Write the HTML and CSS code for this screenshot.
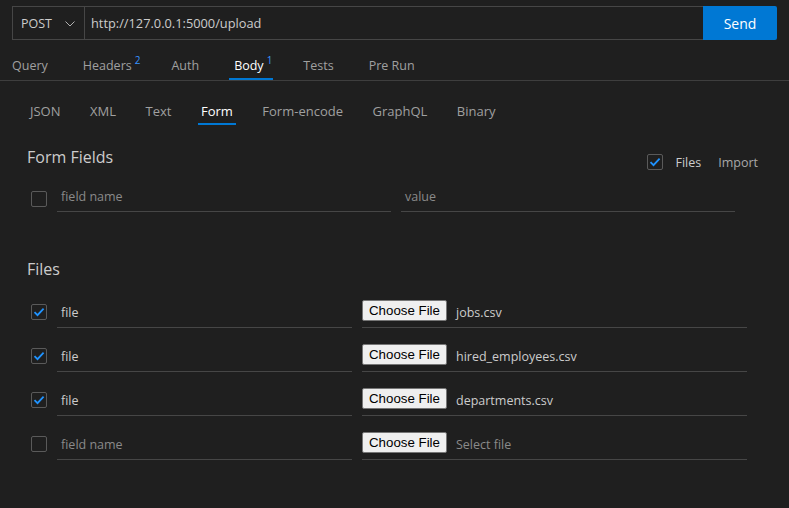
FILE: index.html
```html
<!DOCTYPE html>
<html>
<head>
<meta charset="utf-8">
<link rel="stylesheet" href="styles.css">
</head>
<body>
<div class="urlbar">
  <div class="urlbox">
    <div class="method">POST
      <svg class="chev" width="10" height="6" viewBox="0 0 10 6"><path d="M0.5 0.5 L5 5 L9.5 0.5" fill="none" stroke="#b0b0b0" stroke-width="1"/></svg>
    </div>
    <div class="url">http://127.0.0.1:5000/upload</div>
  </div>
  <div class="send">Send</div>
</div>

<div class="tabs">
  <div class="tab">Query</div>
  <div class="tab">Headers<span class="sup">2</span></div>
  <div class="tab">Auth</div>
  <div class="tab active">Body<span class="sup">1</span></div>
  <div class="tab">Tests</div>
  <div class="tab">Pre Run</div>
</div>

<div class="content">
  <div class="subtabs">
    <div class="subtab">JSON</div>
    <div class="subtab">XML</div>
    <div class="subtab">Text</div>
    <div class="subtab active">Form</div>
    <div class="subtab">Form-encode</div>
    <div class="subtab">GraphQL</div>
    <div class="subtab">Binary</div>
  </div>

  <div class="section-head">
    <div class="heading">Form Fields</div>
    <div class="head-tools">
      <span class="cb checked"><svg width="14" height="14" viewBox="0 0 14 14"><path d="M2.5 7.2 L5.5 10.2 L11.6 3.6" fill="none" stroke="#1f93ff" stroke-width="1.8"/></svg></span>
      <span class="tool-files">Files</span>
      <span class="tool-import">Import</span>
    </div>
  </div>

  <div class="row form-row">
    <span class="cb"></span>
    <div class="field half"><span class="ph">field name</span></div>
    <div class="field half"><span class="ph">value</span></div>
  </div>

  <div class="heading files-heading">Files</div>

  <div class="row file-row">
    <span class="cb checked"><svg width="14" height="14" viewBox="0 0 14 14"><path d="M2.5 7.2 L5.5 10.2 L11.6 3.6" fill="none" stroke="#1f93ff" stroke-width="1.8"/></svg></span>
    <div class="field name"><span class="val">file</span></div>
    <div class="field fileval"><span class="choose">Choose File</span><span class="val">jobs.csv</span></div>
  </div>
  <div class="row file-row">
    <span class="cb checked"><svg width="14" height="14" viewBox="0 0 14 14"><path d="M2.5 7.2 L5.5 10.2 L11.6 3.6" fill="none" stroke="#1f93ff" stroke-width="1.8"/></svg></span>
    <div class="field name"><span class="val">file</span></div>
    <div class="field fileval"><span class="choose">Choose File</span><span class="val">hired_employees.csv</span></div>
  </div>
  <div class="row file-row">
    <span class="cb checked"><svg width="14" height="14" viewBox="0 0 14 14"><path d="M2.5 7.2 L5.5 10.2 L11.6 3.6" fill="none" stroke="#1f93ff" stroke-width="1.8"/></svg></span>
    <div class="field name"><span class="val">file</span></div>
    <div class="field fileval"><span class="choose">Choose File</span><span class="val">departments.csv</span></div>
  </div>
  <div class="row file-row">
    <span class="cb"></span>
    <div class="field name"><span class="ph">field name</span></div>
    <div class="field fileval"><span class="choose">Choose File</span><span class="ph">Select file</span></div>
  </div>
</div>
</body>
</html>
```

FILE: styles.css
```css
* { box-sizing: border-box; }
html, body {
  margin: 0;
  padding: 0;
  background: #1f1f1f;
  color: #cccccc;
  font-family: "Segoe UI", "Open Sans", sans-serif;
  font-size: 12.5px;
}
.urlbar {
  display: flex;
  margin: 6px 12px 0 12px;
  height: 34px;
}
.urlbox {
  flex: 1;
  display: flex;
  border: 1px solid #464646;
  border-right: none;
}
.method {
  width: 72px;
  display: flex;
  align-items: center;
  justify-content: space-between;
  padding: 0 9px 0 8px;
  border-right: 1px solid #464646;
  color: #cccccc;
}
.chev { margin-top: 1px; }
.url {
  display: flex;
  align-items: center;
  padding-left: 6px;
  color: #cccccc;
  font-size: 12.8px;
}
.send {
  width: 74px;
  background: #0078d4;
  color: #ffffff;
  display: flex;
  align-items: center;
  justify-content: center;
  font-size: 14px;
  border-radius: 0 2px 2px 0;
}
.tabs {
  display: flex;
  align-items: flex-end;
  gap: 25px;
  height: 41px;
  padding-left: 7px;
  border-bottom: 1px solid #3e3e3e;
}
.tab {
  line-height: 18px;
  padding: 0 5px 3px 5px;
  border-bottom: 2px solid transparent;
  color: #a0a0a0;
  font-size: 12.5px;
}
.tab.active {
  color: #ffffff;
  border-bottom-color: #0078d4;
}
.sup {
  color: #3794ff;
  font-size: 10px;
  vertical-align: 6px;
  margin-left: 3px;
  margin-right: -4px;
  font-weight: 400;
}
.content {
  padding-left: 27px;
}
.subtabs {
  display: flex;
  gap: 23.5px;
  margin-top: 21px;
}
.subtab {
  line-height: 18px;
  padding: 0 3px 3px 3px;
  border-bottom: 2px solid transparent;
  color: #a0a0a0;
  font-size: 13px;
}
.subtab.active {
  color: #ffffff;
  border-bottom-color: #0078d4;
}
.section-head {
  display: flex;
  justify-content: space-between;
  align-items: flex-start;
  margin-top: 21px;
  padding-right: 31px;
}
.heading {
  font-size: 16px;
  line-height: 22px;
  color: #cccccc;
}
.head-tools {
  display: flex;
  align-items: center;
  height: 16px;
  margin-top: 8px;
}
.tool-files { margin-left: 12px; color: #cccccc; }
.tool-import { margin-left: 17px; color: #a8a8a8; }
.cb {
  width: 16px;
  height: 16px;
  flex: 0 0 16px;
  border: 1px solid #5a5a5a;
  border-radius: 2px;
  display: inline-flex;
  align-items: center;
  justify-content: center;
}
.row {
  display: flex;
  align-items: center;
  gap: 10px;
  padding-left: 4px;
}
.form-row {
  margin-top: 12px;
  padding-right: 54px;
}
.form-row .cb { margin-top: 3px; }
.field {
  height: 30px;
  border-bottom: 1px solid #464646;
  display: flex;
  align-items: center;
  padding-left: 4px;
}
.half { flex: 1 1 0; min-width: 0; }
.ph { color: #8a8a8a; }
.val { color: #cccccc; }
.files-heading { margin-top: 46px; }
.file-row {
  margin-top: 18px;
  padding-right: 42px;
}
.file-row + .file-row { margin-top: 14px; }
.file-row .cb { margin-top: -3px; }
.name { flex: 0 0 295px; }
.fileval { flex: 1 1 0; min-width: 0; padding-left: 0; }
.choose {
  font-family: "Liberation Sans", Arial, sans-serif;
  font-size: 13.3px;
  color: #000000;
  background: #efefef;
  border: 1px solid #767676;
  border-radius: 2px;
  height: 21px;
  width: 85px;
  display: inline-flex;
  align-items: center;
  justify-content: center;
  margin-right: 9px;
  margin-top: -5px;
}
```
